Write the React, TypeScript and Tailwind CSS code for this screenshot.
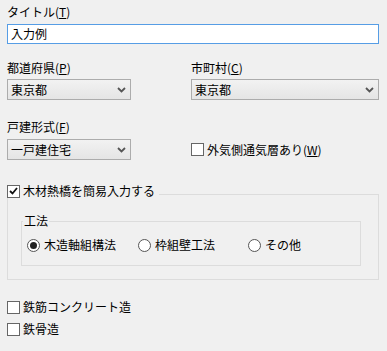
import type { ReactNode } from "react";

const font = { fontFamily: '"Noto Sans CJK JP", "Noto Sans", sans-serif' };

function Label({ children }: { children: ReactNode }) {
  return <div className="h-[14px] leading-[14px] text-[12px] text-black">{children}</div>;
}

function Chevron() {
  return (
    <svg width="9" height="6" viewBox="0 0 9 6" className="shrink-0">
      <path d="M1 1 L4.5 4.5 L8 1" fill="none" stroke="#555" strokeWidth="1.8" />
    </svg>
  );
}

function Select({ value, width }: { value: string; width: string }) {
  return (
    <div
      className={`${width} h-[21px] flex items-center justify-between pl-[3px] pr-[4px] border border-[#acacac] bg-gradient-to-b from-[#f2f2f2] to-[#e5e5e5] text-[12px] leading-[14px]`}
    >
      <span>{value}</span>
      <Chevron />
    </div>
  );
}

function Check({ checked, children }: { checked?: boolean; children: ReactNode }) {
  return (
    <div className="flex items-center gap-[3px] h-[14px] text-[12px] leading-[14px]">
      <span className="w-[13px] h-[13px] border border-[#666] bg-white flex items-center justify-center shrink-0">
        {checked && (
          <svg width="9" height="8" viewBox="0 0 9 8">
            <path d="M1 4 L3.5 6.5 L8 1" fill="none" stroke="#111" strokeWidth="1.8" />
          </svg>
        )}
      </span>
      <span>{children}</span>
    </div>
  );
}

function Radio({ checked, children }: { checked?: boolean; children: ReactNode }) {
  return (
    <div className="flex items-center gap-[4px] h-[14px] text-[12px] leading-[14px]">
      <span className="w-[13px] h-[13px] rounded-full border border-[#555] bg-white flex items-center justify-center shrink-0">
        {checked && <span className="w-[7px] h-[7px] rounded-full bg-[#222]" />}
      </span>
      <span>{children}</span>
    </div>
  );
}

export default function App() {
  return (
    <div className="w-[387px] h-[351px] bg-[#f0f0f0] pl-[7px] pt-[5px] text-black overflow-hidden" style={font}>
      <Label>
        タイトル(<u>T</u>)
      </Label>
      <div className="mt-[5px] w-[372px] h-[20px] border border-[#569de5] bg-white pl-[3px] flex items-center text-[12px] leading-[14px]">
        入力例
      </div>

      <div className="mt-[17px] flex">
        <div className="w-[184px]">
          <Label>
            都道府県(<u>P</u>)
          </Label>
          <div className="mt-[4px]">
            <Select value="東京都" width="w-[124px]" />
          </div>
        </div>
        <div>
          <Label>
            市町村(<u>C</u>)
          </Label>
          <div className="mt-[4px]">
            <Select value="東京都" width="w-[188px]" />
          </div>
        </div>
      </div>

      <div className="mt-[20px]">
        <Label>
          戸建形式(<u>F</u>)
        </Label>
        <div className="mt-[5px] flex items-center">
          <div className="w-[184px]">
            <Select value="一戸建住宅" width="w-[124px]" />
          </div>
          <Check>
            外気側通気層あり(<u>W</u>)
          </Check>
        </div>
      </div>

      <div className="relative mt-[34px] w-[372px] h-[86px] border border-[#dcdcdc]">
        <div className="absolute left-[-1px] top-[-11px] pr-[4px] bg-[#f0f0f0]">
          <Check checked>木材熱橋を簡易入力する</Check>
        </div>
        <div className="relative mt-[26px] ml-[13px] w-[340px] h-[45px] border border-[#dcdcdc] pl-[5px] pt-[16px]">
          <div className="absolute left-[1px] top-[-8px] px-[1px] bg-[#f0f0f0]">
            <Label>工法</Label>
          </div>
          <div className="flex">
            <div className="w-[111px]">
              <Radio checked>木造軸組構法</Radio>
            </div>
            <div className="w-[110px]">
              <Radio>枠組壁工法</Radio>
            </div>
            <Radio>その他</Radio>
          </div>
        </div>
      </div>

      <div className="mt-[20px]">
        <Check>鉄筋コンクリート造</Check>
      </div>
      <div className="mt-[8px]">
        <Check>鉄骨造</Check>
      </div>
    </div>
  );
}
